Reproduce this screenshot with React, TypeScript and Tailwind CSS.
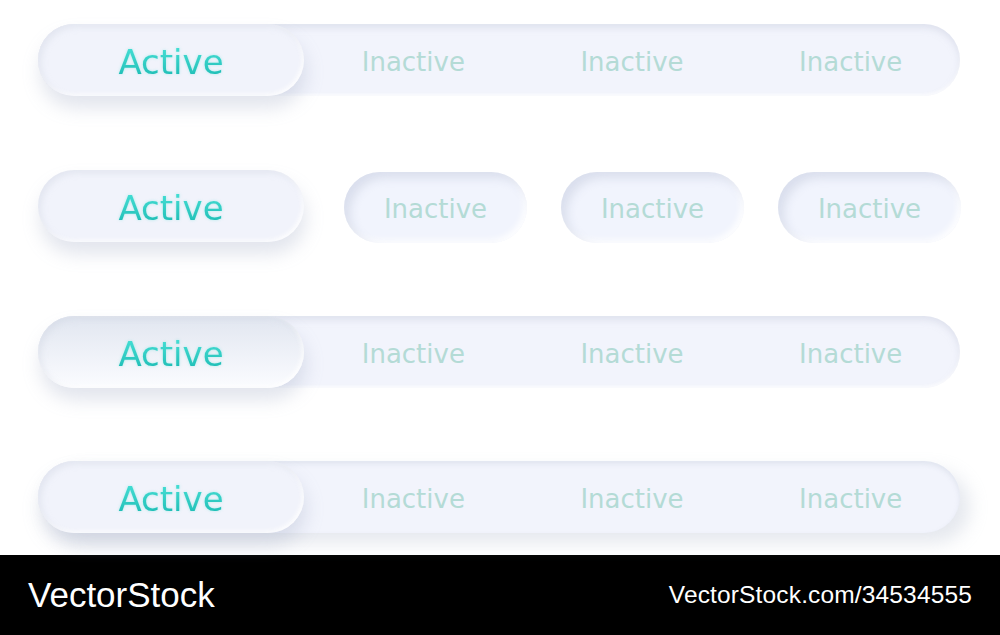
import React from "react";

const font = { fontFamily: "'DejaVu Sans', 'Noto Sans', sans-serif" };

function ActiveLabel() {
  return (
    <span className="mt-[3px] bg-gradient-to-b from-[#4ae2d8] to-[#0db2ac] bg-clip-text text-[34px] leading-none text-transparent [text-shadow:0_0_3px_rgba(60,220,210,0.35)]">
      Active
    </span>
  );
}

function InactiveLabel() {
  return <span className="mt-[3px] text-[26px] leading-none text-[#b4dbd6]">Inactive</span>;
}

function ActivePill({ variant }: { variant: "flat" | "gradient" }) {
  const bg =
    variant === "gradient"
      ? "bg-gradient-to-b from-[#e1e6f0] to-[#fbfcff]"
      : "bg-[#f1f3fb]";
  return (
    <div
      className={`relative z-10 flex h-[72px] w-[266px] shrink-0 items-center justify-center rounded-full ${bg} shadow-[2px_12px_18px_rgba(150,160,190,0.28),inset_3px_3px_6px_rgba(200,206,222,0.35),inset_-2px_-2px_4px_rgba(255,255,255,0.9)]`}
    >
      <ActiveLabel />
    </div>
  );
}

function TabBar({ variant, raised }: { variant: "flat" | "gradient"; raised?: boolean }) {
  return (
    <div
      className={`flex h-[72px] w-[922px] items-center rounded-full bg-[#f2f4fc] ${
        raised
          ? "shadow-[10px_10px_18px_rgba(170,178,200,0.3),inset_0_3px_5px_rgba(205,210,225,0.45)]"
          : "shadow-[inset_0_4px_6px_rgba(205,210,225,0.5),inset_0_-2px_3px_rgba(255,255,255,0.8)]"
      }`}
    >
      <ActivePill variant={variant} />
      {[0, 1, 2].map((i) => (
        <div key={i} className="flex flex-1 items-center justify-center">
          <InactiveLabel />
        </div>
      ))}
    </div>
  );
}

function SmallPill({ className }: { className: string }) {
  return (
    <div
      className={`flex h-[71px] w-[183px] items-center justify-center rounded-full bg-[#f1f4fd] shadow-[inset_6px_6px_10px_rgba(190,198,218,0.45),inset_-3px_-3px_6px_rgba(255,255,255,0.9)] ${className}`}
    >
      <InactiveLabel />
    </div>
  );
}

export default function App() {
  return (
    <div className="h-[635px] w-[1000px] overflow-hidden bg-white" style={font}>
      <div className="flex h-[555px] flex-col gap-[73px] pl-[38px] pt-[24px]">
        <TabBar variant="flat" />
        <div className="flex items-center">
          <ActivePill variant="flat" />
          <SmallPill className="ml-[40px] mt-[3px]" />
          <SmallPill className="ml-[34px] mt-[3px]" />
          <SmallPill className="ml-[34px] mt-[3px]" />
        </div>
        <TabBar variant="gradient" />
        <TabBar variant="flat" raised />
      </div>
      <div
        className="flex h-[80px] items-center justify-between bg-black pl-[28px] pr-[28px] text-white"
        style={{ fontFamily: "'Liberation Sans', Arial, sans-serif" }}
      >
        <span className="text-[35px]">VectorStock</span>
        <span className="text-[24.5px] tracking-[0.15px]">VectorStock.com/34534555</span>
      </div>
    </div>
  );
}
